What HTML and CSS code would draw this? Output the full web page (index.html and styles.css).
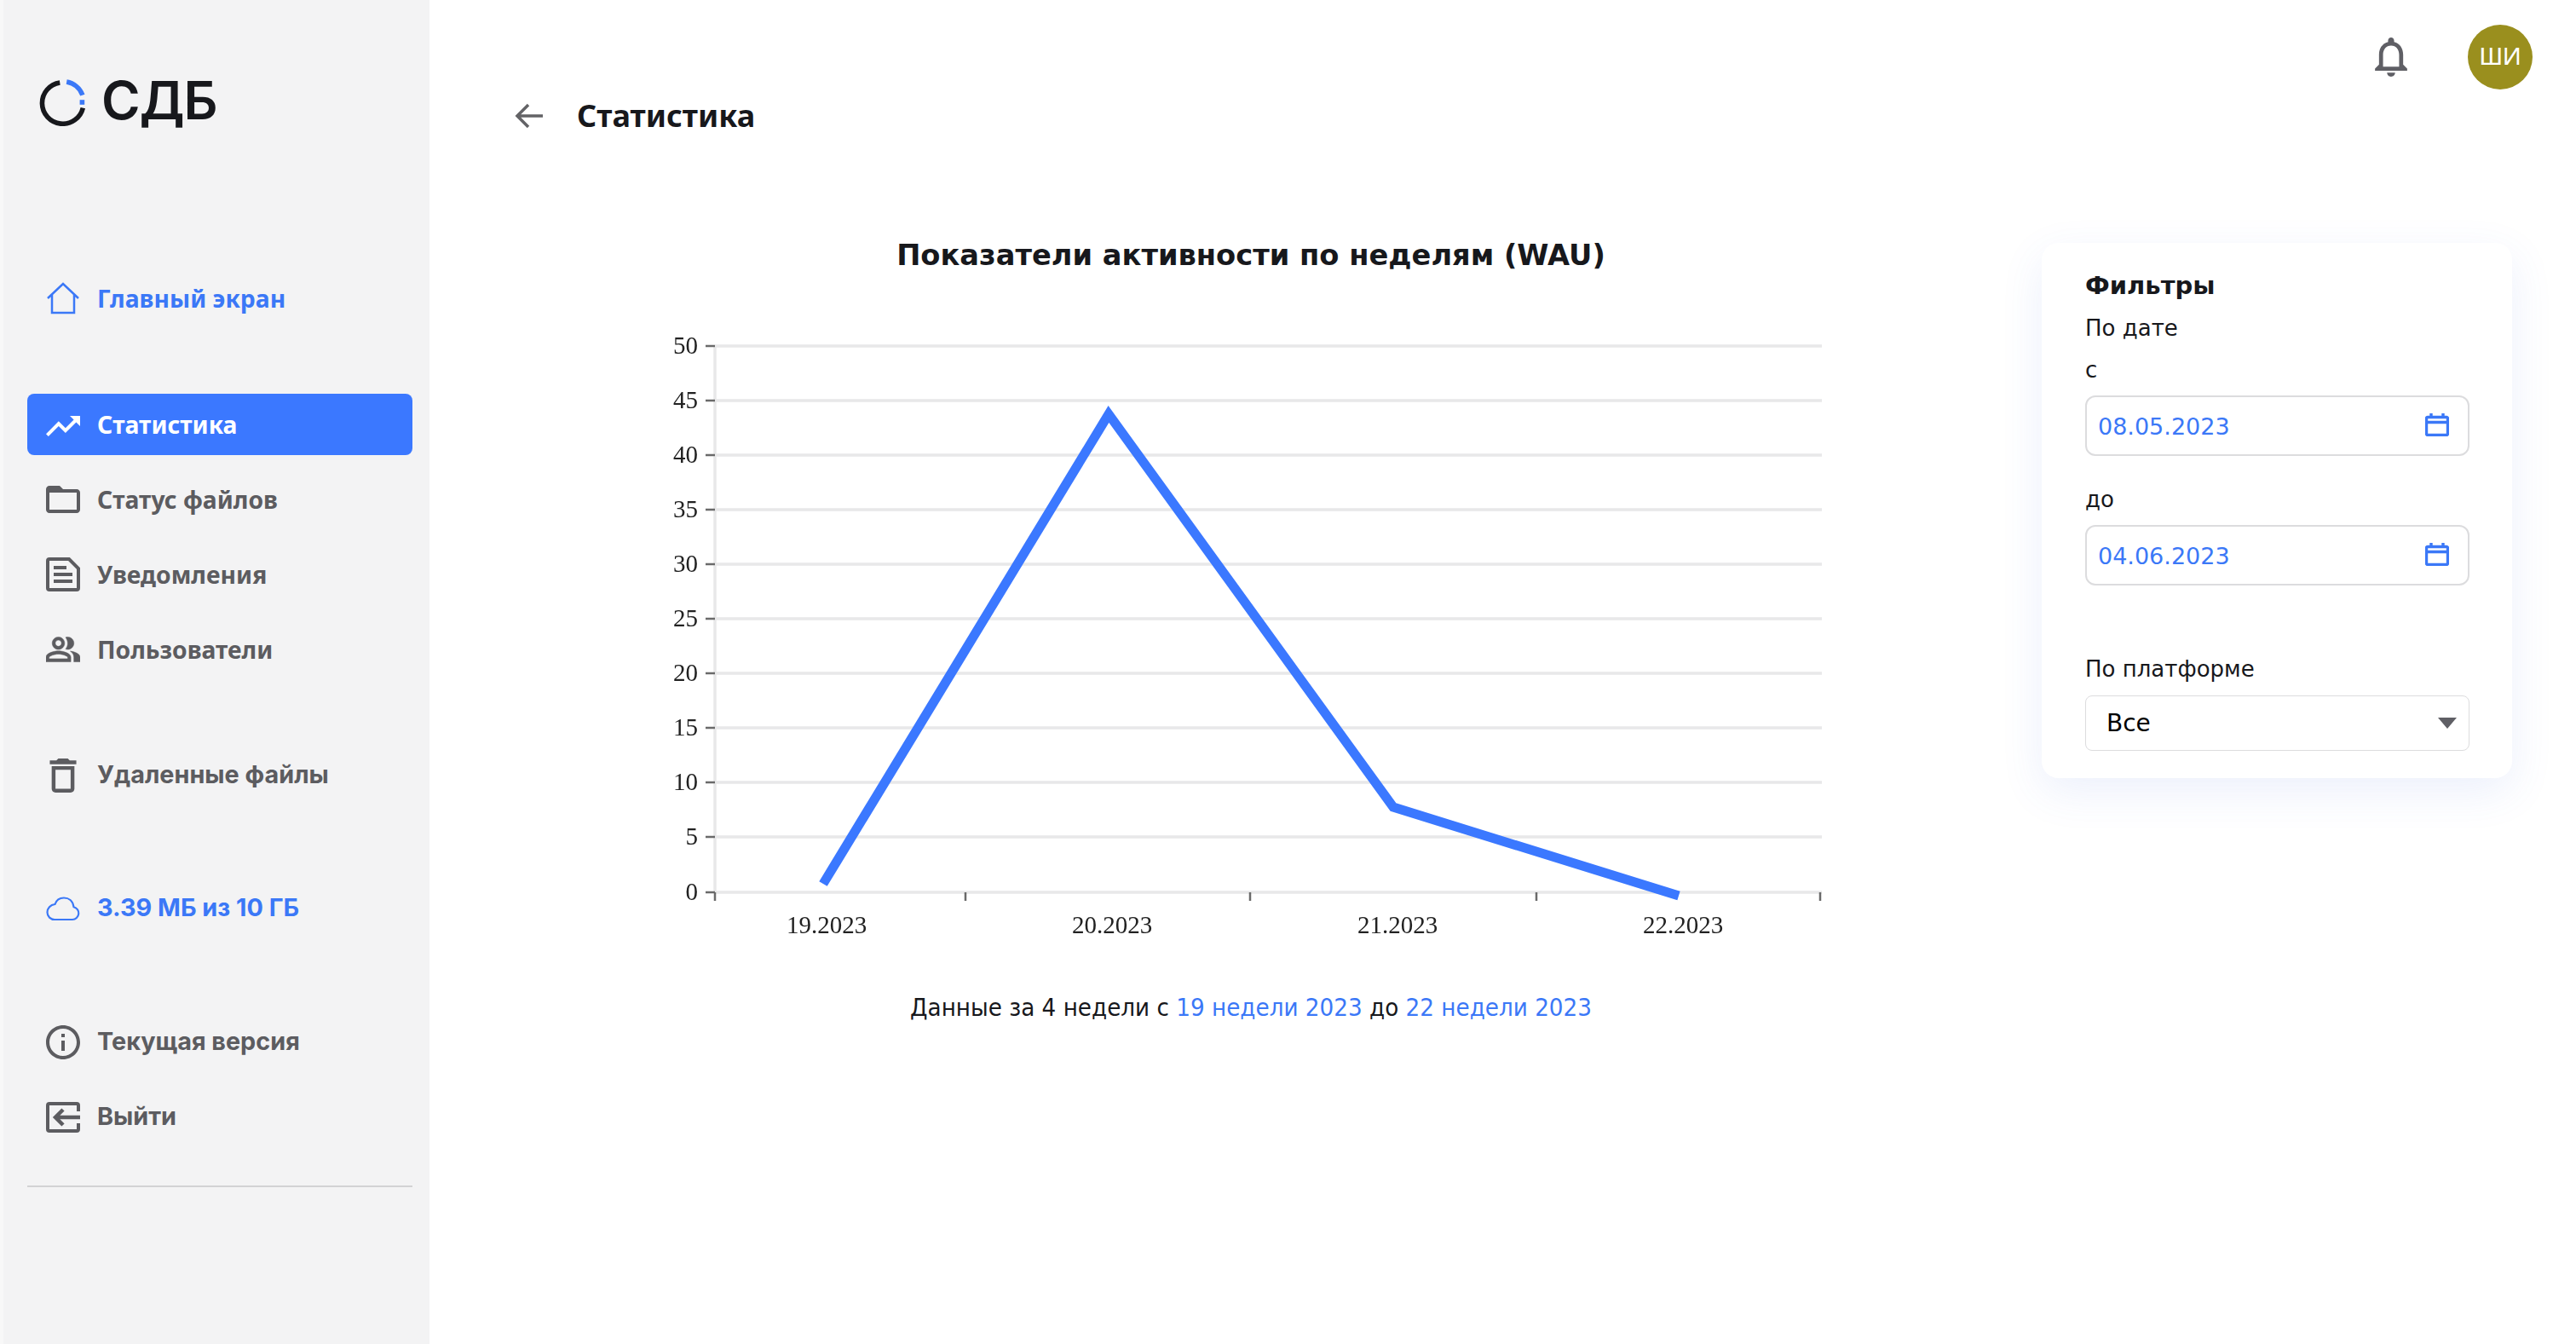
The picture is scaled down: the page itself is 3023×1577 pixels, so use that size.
FILE: index.html
```html
<!DOCTYPE html>
<html lang="ru">
<head>
<meta charset="utf-8">
<title>Статистика</title>
<link rel="stylesheet" href="styles.css">
</head>
<body>
<div class="app">
  <aside class="sidebar">
    <div class="logo">
      <svg class="logo-mark" viewBox="0 0 60 60"><path d="M26 5.300A26 26 0 1 0 55 37" fill="none" stroke="#17181c" stroke-width="6"/><path d="M34.500 4.400A26 26 0 0 1 54.500 21" fill="none" stroke="#3b78f7" stroke-width="6"/><rect x="51" y="27" width="6" height="6" fill="#3b78f7"/></svg>
      <span class="logo-text">СДБ</span>
    </div>
    <nav class="nav nav-home">
      <a class="item accent"><svg class="ic" viewBox="0 0 40 40"><path d="M2 20L20 3l18 17M7 16v21h26V16" fill="none" stroke="currentColor" stroke-width="2.500"/></svg><span>Главный экран</span></a>
    </nav>
    <nav class="nav nav-main">
      <a class="item active"><svg class="ic" viewBox="2 1 20 20"><path d="M16 6l2.290 2.290-4.880 4.880-4-4L2 16.590 3.410 18l6-6 4 4 6.300-6.290L22 12V6z" fill="currentColor"/></svg><span>Статистика</span></a>
      <a class="item"><svg class="ic" viewBox="2 2 20 20"><path d="M20 6h-8l-2-2H4c-1.100 0-1.990.9-1.990 2L2 18c0 1.100.9 2 2 2h16c1.100 0 2-.9 2-2V8c0-1.100-.9-2-2-2zm0 12H4V8h16v10z" fill="currentColor"/></svg><span>Статус файлов</span></a>
      <a class="item"><svg class="ic" viewBox="0 0 40 40"><path d="M2 4a2 2 0 0 1 2-2h23l11 11v23a2 2 0 0 1-2 2H4a2 2 0 0 1-2-2z" fill="none" stroke="currentColor" stroke-width="4"/><path d="M9 10h15v4H9zM9 18h22v4H9zM9 26h22v4H9z" fill="currentColor"/></svg><span>Уведомления</span></a>
      <a class="item"><svg class="ic" viewBox="1 4 22 16"><path d="M16.670 13.130C18.040 14.060 19 15.320 19 17v3h4v-3c0-2.180-3.570-3.470-6.330-3.870zM15 12c2.210 0 4-1.790 4-4s-1.790-4-4-4c-.47 0-.91.1-1.330.24C14.500 5.270 15 6.580 15 8s-.5 2.730-1.330 3.760c.42.14.86.24 1.330.24zM9 12c2.210 0 4-1.790 4-4s-1.790-4-4-4-4 1.790-4 4 1.790 4 4 4zm0-6c1.100 0 2 .9 2 2s-.9 2-2 2-2-.9-2-2 .9-2 2-2zm0 7c-2.670 0-8 1.340-8 4v3h16v-3c0-2.660-5.330-4-8-4zm6 5H3v-.99C3.200 16.290 6.300 15 9 15s5.800 1.290 6 2v1z" fill="currentColor" stroke="currentColor" stroke-width=".3"/></svg><span>Пользователи</span></a>
    </nav>
    <nav class="nav nav-trash">
      <a class="item"><svg class="ic" viewBox="3 3 18 18"><path d="M6 19c0 1.100.9 2 2 2h8c1.100 0 2-.9 2-2V7H6v12zM8 9h8v10H8V9zm7.500-5l-1-1h-5l-1 1H5v2h14V4z" fill="currentColor"/></svg><span class="wide">Удаленные файлы</span></a>
    </nav>
    <div class="nav nav-storage">
      <a class="item accent"><svg class="ic" viewBox="0 0 40 40"><path d="M10 33h21a7.500 7.500 0 0 0 1.500-14.800C31.500 11 26.500 7.500 21 7.500c-5 0-9 3-10.500 7.500C5 15.500 1.500 20 1.500 24.500c0 5 4 8.500 8.500 8.500z" fill="none" stroke="currentColor" stroke-width="2.200"/></svg><span class="wide">3.39 МБ из 10 ГБ</span></a>
    </div>
    <nav class="nav nav-bottom">
      <a class="item"><svg class="ic" viewBox="2 2 20 20"><path d="M11 7h2v2h-2zm0 4h2v6h-2zm1-9C6.480 2 2 6.480 2 12s4.480 10 10 10 10-4.480 10-10S17.520 2 12 2zm0 18c-4.410 0-8-3.590-8-8s3.590-8 8-8 8 3.590 8 8-3.590 8-8 8z" fill="currentColor"/></svg><span class="wide">Текущая версия</span></a>
      <a class="item"><svg class="ic" viewBox="0 0 40 40"><path d="M38 13V6a2 2 0 0 0-2-2H4a2 2 0 0 0-2 2v28a2 2 0 0 0 2 2h32a2 2 0 0 0 2-2v-7" fill="none" stroke="currentColor" stroke-width="4"/><path d="M40 20H12M20 11l-9 9 9 9" fill="none" stroke="currentColor" stroke-width="4.500"/></svg><span class="wide">Выйти</span></a>
    </nav>
    <hr class="rule">
  </aside>

  <main class="main">
    <header class="topbar">
      <svg class="bell" viewBox="4 2.500 16 19.500"><path d="M12 22c1.100 0 2-.9 2-2h-4c0 1.100.9 2 2 2zm6-6v-5c0-3.070-1.630-5.640-4.500-6.320V4c0-.83-.67-1.500-1.500-1.500s-1.500.67-1.500 1.500v.68C7.640 5.360 6 7.920 6 11v5l-2 2v1h16v-1l-2-2zm-2 1H8v-6c0-2.480 1.510-4.500 4-4.500s4 2.020 4 4.500v6z" fill="currentColor"/></svg>
      <div class="avatar">ШИ</div>
    </header>
    <div class="pagehead">
      <svg class="back" viewBox="0 0 34 30"><path d="M33 15H3M16 2L3 15l13 13" fill="none" stroke="currentColor" stroke-width="3.500"/></svg>
      <h1 class="page-title">Статистика</h1>
    </div>
    <div class="content">
      <section class="chart-col">
        <h2 class="chart-title">Показатели активности по неделям (WAU)</h2>
        <svg class="chart" viewBox="777 380 1380 740">
          <g class="grid">
            <path d="M839 406H2138M839 470H2138M839 534H2138M839 598H2138M839 662H2138M839 726H2138M839 790H2138M839 854H2138M839 918H2138M839 982H2138M839 1047H2138"/>
            <path d="M839 406V1047"/>
          </g>
          <g class="ticks">
            <path d="M828 406h11M828 470h11M828 534h11M828 598h11M828 662h11M828 726h11M828 790h11M828 854h11M828 918h11M828 982h11M828 1047h11"/>
            <path d="M839 1047v10M1133 1047v10M1467 1047v10M1803 1047v10M2136 1047v10"/>
          </g>
          <g class="ylab">
            <text x="819" y="415">50</text><text x="819" y="479">45</text><text x="819" y="543">40</text><text x="819" y="607">35</text><text x="819" y="671">30</text><text x="819" y="735">25</text><text x="819" y="799">20</text><text x="819" y="863">15</text><text x="819" y="927">10</text><text x="819" y="991">5</text><text x="819" y="1056">0</text>
          </g>
          <g class="xlab">
            <text x="970" y="1095">19.2023</text><text x="1305" y="1095">20.2023</text><text x="1640" y="1095">21.2023</text><text x="1975" y="1095">22.2023</text>
          </g>
          <path class="line" d="M966 1037L1301 486L1635 947L1970 1051"/>
        </svg>
        <p class="caption">Данные за 4 недели с <span class="link">19 недели 2023</span> до <span class="link">22 недели 2023</span></p>
      </section>
      <aside class="filters">
        <h3 class="filters-title">Фильтры</h3>
        <div class="lab lab-date">По дате</div>
        <div class="lab lab-from">с</div>
        <div class="field">
          <span>08.05.2023</span>
          <svg class="cal" viewBox="0 0 28 28"><path d="M3 5.500h22a1.500 1.500 0 0 1 1.500 1.500v18a1.500 1.500 0 0 1-1.500 1.500H3A1.500 1.500 0 0 1 1.500 25V7A1.500 1.500 0 0 1 3 5.500zM1.500 11.500h25" fill="none" stroke="currentColor" stroke-width="3.400"/><path d="M7 1v5M21 1v5" stroke="currentColor" stroke-width="3.400"/></svg>
        </div>
        <div class="lab lab-to">до</div>
        <div class="field">
          <span>04.06.2023</span>
          <svg class="cal" viewBox="0 0 28 28"><path d="M3 5.500h22a1.500 1.500 0 0 1 1.500 1.500v18a1.500 1.500 0 0 1-1.500 1.500H3A1.500 1.500 0 0 1 1.500 25V7A1.500 1.500 0 0 1 3 5.500zM1.500 11.500h25" fill="none" stroke="currentColor" stroke-width="3.400"/><path d="M7 1v5M21 1v5" stroke="currentColor" stroke-width="3.400"/></svg>
        </div>
        <div class="lab lab-platform">По платформе</div>
        <div class="select"><span>Все</span><i class="caret"></i></div>
      </aside>
    </div>
  </main>
</div>
</body>
</html>
```
FILE: styles.css
```css
* { box-sizing: border-box; }
html, body { margin: 0; height: 100%; }
body { background: #fff; font-family: "DejaVu Sans", sans-serif; color: #17181c; overflow: hidden; }
.app { display: flex; width: 3023px; height: 1577px; }

.sidebar { width: 504px; flex: none; background: #f3f3f4; border-left: 4px solid #f8f8f8; padding: 0 20px 0 28px; display: flex; flex-direction: column; }
.logo { display: flex; align-items: center; height: 60px; margin-top: 90px; margin-left: 14px; gap: 17px; }
.logo-mark { width: 56px; height: 56px; flex: none; }
.logo-text { font: 600 62px/60px Inter, sans-serif; letter-spacing: -1px; position: relative; top: -2px; }

.nav { display: flex; flex-direction: column; gap: 16px; }
.nav-home { margin-top: 164px; }
.nav-main { margin-top: 76px; }
.nav-trash { margin-top: 76px; }
.nav-storage { margin-top: 84px; }
.nav-bottom { margin-top: 85px; }
.item { display: flex; align-items: center; height: 72px; padding-left: 22px; gap: 20px; border-radius: 8px; color: #5c5c60; font: 700 28.300px/1 "Noto Sans", sans-serif; }
.item .wide { font-family: Inter, sans-serif; font-weight: 700; font-size: 28.800px; position: relative; top: -1px; }
.item.accent { color: #3b78f7; }
.item.active { background: #3b78ff; color: #fff; }
.ic { width: 40px; height: 40px; flex: none; }
.rule { width: 100%; height: 2px; margin: 44px 0 0; border: 0; background: #d2d2d4; }

.main { flex: 1; display: flex; flex-direction: column; min-width: 0; }
.topbar { display: flex; justify-content: flex-end; align-items: center; gap: 71px; height: 76px; margin-top: 29px; padding-right: 51px; }
.bell { width: 38px; height: 46px; color: #5f5f65; }
.avatar { width: 76px; height: 76px; padding-bottom: 3px; border-radius: 50%; background: #9a8f1e; color: #fff; display: flex; align-items: center; justify-content: center; font: 400 30px/1 "Liberation Sans", sans-serif; }
.pagehead { display: flex; align-items: center; height: 60px; padding-top: 2px; padding-left: 100px; gap: 39px; }
.back { width: 34px; height: 30px; color: #636366; flex: none; }
.page-title { margin: 0; font: 700 36px/1 "Noto Sans", sans-serif; }

.content { display: flex; align-items: flex-start; padding-left: 116px; }
.chart-col { width: 1696px; flex: none; display: flex; flex-direction: column; align-items: center; padding-top: 114px; }
.chart-title { margin: 0; font: 700 33.700px/42px "DejaVu Sans", sans-serif; white-space: nowrap; }
.chart { width: 1380px; height: 740px; display: block; margin-top: 59px; position: relative; left: -1px; filter: blur(0.5px); }
.grid path { stroke: #e8e8e9; stroke-width: 3.500; fill: none; }
.ticks path { stroke: #6a6a6a; stroke-width: 2.500; fill: none; }
.ylab text { font: 400 29px "Liberation Serif", serif; fill: #222; text-anchor: end; }
.xlab text { font: 400 29px "Liberation Serif", serif; fill: #222; text-anchor: middle; }
.line { fill: none; stroke: #3b78ff; stroke-width: 11; }
.caption { margin: 44px 0 0; font: 400 29.200px/36px "DejaVu Sans", sans-serif; font-stretch: condensed; }
.link { color: #3b78f7; }

.filters { width: 552px; flex: none; margin-left: 80px; margin-top: 120px; background: #fff; border-radius: 20px; padding: 31px 50px 32px 51px; box-shadow: 0 16px 50px rgba(70, 110, 230, 0.10); }
.filters-title { margin: 0; font: 700 29px/38px "DejaVu Sans", sans-serif; }
.lab { font-size: 26px; line-height: 34px; }
.lab-date { margin-top: 14px; }
.lab-from { margin-top: 15px; }
.lab-from + .field { margin-top: 13px; }
.lab-to { margin-top: 34px; }
.lab-to + .field { margin-top: 13px; }
.lab-platform { margin-top: 81px; }
.field { display: flex; align-items: center; justify-content: space-between; height: 71px; margin-top: 14px; padding: 0 22px 0 13px; border: 2px solid #dcdcde; border-radius: 12px; color: #3b78f7; font-size: 27px; }
.field span { position: relative; top: 1px; }
.cal { width: 28px; height: 28px; position: relative; top: -2px; }
.select { display: flex; align-items: center; justify-content: space-between; height: 65px; margin-top: 14px; padding: 0 14px 0 24px; border: 1.500px solid #dcdcde; border-radius: 8px; font-size: 28px; color: #000; }
.caret { width: 0; height: 0; border-left: 11px solid transparent; border-right: 11px solid transparent; border-top: 13px solid #5f5f65; }
```
